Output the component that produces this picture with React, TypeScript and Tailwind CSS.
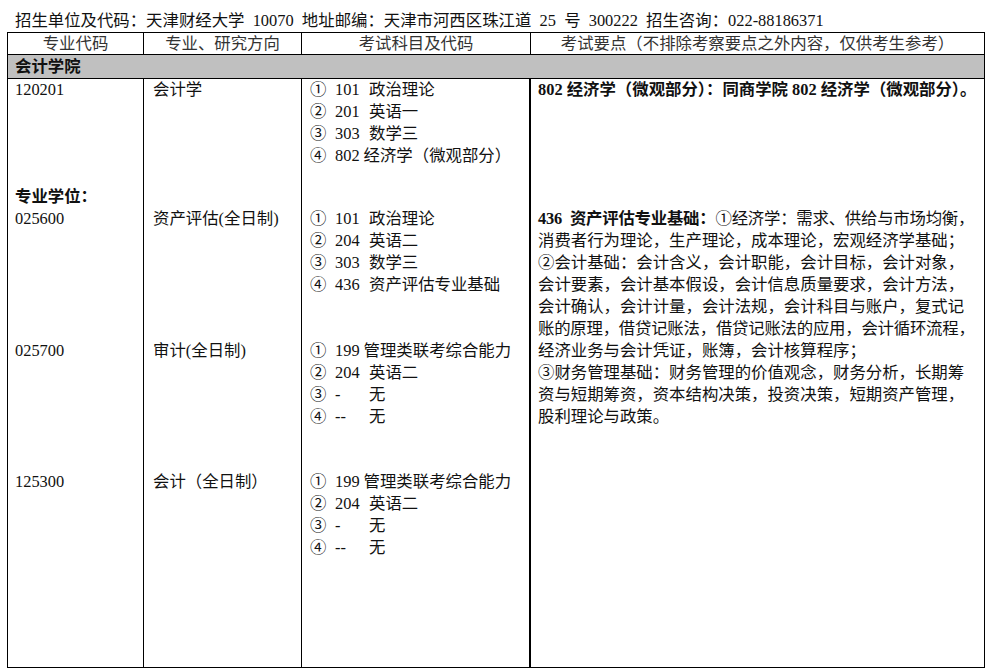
import React from "react";

const F = "[font-family:'Liberation_Serif','Noto_Sans_CJK_SC',serif]";
const SP = "\u2002";

type Item = [string, string, string, boolean];

const rowA: Item[] = [
  ["①", "101", "政治理论", true],
  ["②", "201", "英语一", true],
  ["③", "303", "数学三", true],
  ["④", "802", "经济学（微观部分）", false],
];
const rowB: Item[] = [
  ["①", "101", "政治理论", true],
  ["②", "204", "英语二", true],
  ["③", "303", "数学三", true],
  ["④", "436", "资产评估专业基础", true],
];
const rowC: Item[] = [
  ["①", "199", "管理类联考综合能力", false],
  ["②", "204", "英语二", true],
  ["③", "-", "无", true],
  ["④", "--", "无", true],
];

function Subjects({ items }: { items: Item[] }) {
  return (
    <div>
      {items.map(([c, code, name, wide], i) => (
        <div key={i} className="flex whitespace-nowrap">
          <span className="w-[25px] shrink-0">{c}</span>
          <span className={wide ? "w-[34px] shrink-0" : "shrink-0 mr-[4px]"}>{code}</span>
          <span>{name}</span>
        </div>
      ))}
    </div>
  );
}

const notes: React.ReactNode[] = [
  <>
    <b>436{SP}资产评估专业基础：</b>①经济学：需求、供给与市场均衡，
  </>,
  "消费者行为理论，生产理论，成本理论，宏观经济学基础；",
  "②会计基础：会计含义，会计职能，会计目标，会计对象，",
  "会计要素，会计基本假设，会计信息质量要求，会计方法，",
  "会计确认，会计计量，会计法规，会计科目与账户，复式记",
  "账的原理，借贷记账法，借贷记账法的应用，会计循环流程，",
  "经济业务与会计凭证，账簿，会计核算程序；",
  "③财务管理基础：财务管理的价值观念，财务分析，长期筹",
  "资与短期筹资，资本结构决策，投资决策，短期资产管理，",
  "股利理论与政策。",
];

export default function App() {
  return (
    <div className={`${F} text-[16.4px] leading-[22px] text-[#111] bg-white w-[994px] h-[672px] pt-[10px]`}>
      <div className="pl-[15px] whitespace-nowrap">
        招生单位及代码：天津财经大学{SP}10070{SP}地址邮编：天津市河西区珠江道{SP}25{SP}号{SP}300222{SP}招生咨询：022-88186371
      </div>
      <div className="ml-[7px] w-[978px] border-l border-t border-b border-black grid grid-cols-[136px_158px_229px_454px] grid-rows-[22px_24px_107px_154px_131px_196px]">
        {/* header */}
        <div className="border-r border-b border-black text-center leading-[21px] text-[#333]">专业代码</div>
        <div className="border-r border-b border-black text-center leading-[21px] text-[#333]">专业、研究方向</div>
        <div className="border-r border-b border-black text-center leading-[21px] text-[#333]">考试科目及代码</div>
        <div className="border-r border-b border-black text-center leading-[21px] text-[#333] whitespace-nowrap">
          考试要点（不排除考察要点之外内容，仅供考生参考）
        </div>
        {/* section */}
        <div className="col-span-4 bg-[#c0c0c0] border-r border-b border-black pl-[7px] font-bold leading-[23px]">
          会计学院
        </div>
        {/* row A */}
        <div className="border-r border-black pl-[7px]">120201</div>
        <div className="border-r border-black pl-[9px]">会计学</div>
        <div className="border-r-2 border-black pl-[8px]">
          <Subjects items={rowA} />
        </div>
        <div className="border-r border-black pl-[7px] font-bold whitespace-nowrap">
          802 经济学（微观部分）：同商学院 802 经济学（微观部分）。
        </div>
        {/* row B */}
        <div className="border-r border-black pl-[7px]">
          <div className="font-bold">专业学位：</div>
          <div>025600</div>
        </div>
        <div className="border-r border-black pl-[9px] pt-[22px]">资产评估(全日制)</div>
        <div className="border-r-2 border-black pl-[8px] pt-[22px]">
          <Subjects items={rowB} />
        </div>
        <div className="row-span-3 border-r border-black pl-[7px] pt-[22px]">
          {notes.map((n, i) => (
            <div key={i} className={`whitespace-nowrap ${i === 0 || i === 5 ? "tracking-[-0.22px]" : ""}`}>
              {n}
            </div>
          ))}
        </div>
        {/* row C */}
        <div className="border-r border-black pl-[7px]">025700</div>
        <div className="border-r border-black pl-[9px]">审计(全日制)</div>
        <div className="border-r-2 border-black pl-[8px]">
          <Subjects items={rowC} />
        </div>
        {/* row D */}
        <div className="border-r border-black pl-[7px]">125300</div>
        <div className="border-r border-black pl-[9px]">会计（全日制）</div>
        <div className="border-r-2 border-black pl-[8px]">
          <Subjects items={rowC} />
        </div>
      </div>
    </div>
  );
}
